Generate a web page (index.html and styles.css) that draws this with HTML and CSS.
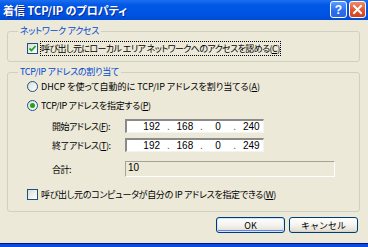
FILE: index.html
```html
<!DOCTYPE html>
<html>
    <head>
        <title>着信 TCP/IP のプロパティ</title>
        <meta charset="utf-8">
        <link rel="stylesheet" href="styles.css">
    </head>
    <body>
      <div class="window">
            <div class="titlebar">
                  <span class="title">着信 TCP/IP のプロパティ</span>
                  <span class="tbtn help">?</span>
                  <span class="tbtn close">
                        <svg width="11" height="11" viewBox="0 0 11 11"><path d="M2 2 L9 9 M9 2 L2 9" stroke="#fff" stroke-width="2" stroke-linecap="square"/></svg>
                  </span>
            </div>

            <div class="content">
                  <fieldset class="group group-1">
                        <legend>ネットワーク アクセス</legend>
                        <div class="row r-lan">
                              <span class="check on">
                                    <svg width="9" height="9" viewBox="0 0 9 9"><path d="M1.5 4.5 L3.5 6.5 L7.5 2" stroke="#21a121" stroke-width="1.8" fill="none"/></svg>
                              </span>
                              <span class="focus">呼び出し元にローカル エリア ネットワークへのアクセスを認める(<u>C</u>)</span>
                        </div>
                  </fieldset>

                  <fieldset class="group group-2">
                        <legend>TCP/IP アドレスの割り当て</legend>
                        <div class="row r-dhcp">
                              <span class="radio"></span>
                              <span>DHCP を使って自動的に TCP/IP アドレスを割り当てる(<u>A</u>)</span>
                        </div>
                        <div class="row r-static">
                              <span class="radio on"></span>
                              <span>TCP/IP アドレスを指定する(<u>P</u>)</span>
                        </div>
                        <div class="row r-ip1">
                              <span class="lbl">開始アドレス(<u>F</u>):</span>
                              <span class="ip">
                                    <span class="oct">192</span><span class="dot">.</span><span class="oct">168</span><span class="dot">.</span><span class="oct">0</span><span class="dot">.</span><span class="oct">240</span>
                              </span>
                        </div>
                        <div class="row r-ip2">
                              <span class="lbl">終了アドレス(<u>T</u>):</span>
                              <span class="ip">
                                    <span class="oct">192</span><span class="dot">.</span><span class="oct">168</span><span class="dot">.</span><span class="oct">0</span><span class="dot">.</span><span class="oct">249</span>
                              </span>
                        </div>
                        <div class="row r-total">
                              <span class="lbl">合計:</span>
                              <span class="total">10</span>
                        </div>
                        <div class="row r-caller">
                              <span class="check"></span>
                              <span>呼び出し元のコンピュータが自分の IP アドレスを指定できる(<u>W</u>)</span>
                        </div>
                  </fieldset>

                  <div class="buttons">
                        <button class="btn default">OK</button>
                        <button class="btn">キャンセル</button>
                  </div>
            </div>

            <div class="frame-bottom"></div>
      </div>
    </body>
</html>
```

FILE: styles.css
```css
body{
      margin: 0;
      font-family: "Noto Sans CJK JP", sans-serif;
      font-size: 9px;
      letter-spacing: -0.3px;
      font-feature-settings: "palt";
      color: #000;
      background: #ece9d8;
}
.window{
      width: 368px;
      height: 247px;
      display: flex;
      flex-direction: column;
      overflow: hidden;
}

/* title bar */
.titlebar{
      height: 20px;
      flex: none;
      display: flex;
      align-items: center;
      gap: 2px;
      padding: 0 2px 1px 3px;
      box-sizing: border-box;
      background: linear-gradient(#1e6ef0, #0058e6 25%, #0054e3 70%, #004bd4);
}
.title{
      flex: 1;
      color: #fff;
      font-weight: bold;
      font-size: 11px;
      letter-spacing: 0;
      text-shadow: 1px 1px #0a2a9a;
}
.tbtn{
      width: 15px;
      height: 15px;
      border: 1px solid #fff;
      border-radius: 3px;
      display: flex;
      align-items: center;
      justify-content: center;
      color: #fff;
      font-family: "Liberation Sans", sans-serif;
      font-weight: bold;
      font-size: 12px;
      letter-spacing: 0;
}
.help{background: linear-gradient(#5a9bff, #2a6cf0 60%, #2d64e0);}
.close{background: linear-gradient(#f08a68, #e0502c 60%, #d0421f);}

/* body */
.content{
      flex: 1;
      display: flex;
      flex-direction: column;
      padding: 5px 8px 0 7px;
}
.group{
      margin: 0;
      border: 1px solid #d0d0bf;
      border-radius: 3px;
      display: flex;
      flex-direction: column;
      padding: 0 6px 0 19px;
}
.group legend{
      color: #0046d5;
      padding: 0 2px;
      margin-left: -9px;
      line-height: 12px;
}
.group-1{padding-top: 4px; padding-bottom: 6px;}
.group-2{margin-top: 4px; padding-top: 1px; padding-bottom: 10px;}

.row{
      display: flex;
      align-items: center;
      gap: 3px;
      height: 14px;
      white-space: nowrap;
}
.r-lan{letter-spacing: -0.6px;}
.r-dhcp{letter-spacing: 0;}
.r-static{margin-top: 5px;}
.r-ip1{margin-top: 7px;}
.r-ip2{margin-top: 5px;}
.r-total{margin-top: 9px; height: 16px; align-items: flex-start;}
.r-total .lbl{padding-top: 2px;}
.r-caller{margin-top: 10px;}

.focus{outline: 1px dotted #000; outline-offset: 0;}

.check{
      width: 9px;
      height: 9px;
      border: 1px solid #1c5180;
      background: linear-gradient(135deg, #dcdcd7, #fff);
      display: flex;
      align-items: center;
      justify-content: center;
      flex: none;
}
.radio{
      width: 9px;
      height: 9px;
      border: 1px solid #1c5180;
      border-radius: 50%;
      background: linear-gradient(135deg, #dcdcd7, #fff);
      flex: none;
      position: relative;
}
.radio.on::after{
      content: "";
      position: absolute;
      left: 2px;
      top: 2px;
      width: 5px;
      height: 5px;
      border-radius: 50%;
      background: #21a121;
}

.lbl{
      width: 73px;
      margin-left: 25px;
      flex: none;
      letter-spacing: -0.5px;
}
.ip{
      width: 139px;
      height: 14px;
      box-sizing: border-box;
      background: #fff;
      border-style: solid;
      border-width: 2px 1px 1px 2px;
      border-color: #8a8a88 #f4f3ee #f4f3ee #8a8a88;
      display: flex;
      align-items: center;
      padding-left: 13px;
      margin-left: -3px;
      font-family: "Liberation Sans", sans-serif;
      font-size: 10px;
      letter-spacing: 0;
}
.oct{width: 24px; text-align: center;}
.dot{width: 10px; text-align: center; color: #555;}
.total{
      width: 210px;
      height: 16px;
      box-sizing: border-box;
      border-style: solid;
      border-width: 1px;
      border-color: #a5a397 #fff #fff #a5a397;
      padding: 0 2px;
      margin-left: -3px;
      font-family: "Liberation Sans", sans-serif;
      font-size: 10px;
      letter-spacing: 0;
      line-height: 12px;
}

/* buttons */
.buttons{
      display: flex;
      justify-content: flex-end;
      gap: 4px;
      margin-top: 5px;
      padding-right: 2px;
}
.btn{
      width: 69px;
      height: 16px;
      padding: 0;
      border: 1px solid #003c74;
      border-radius: 3px;
      background: linear-gradient(#fff, #f4f3ee 50%, #e6e3d8 85%, #d6d0c5);
      font-family: "Noto Sans CJK JP", "Liberation Sans", sans-serif;
      font-size: 9px;
      letter-spacing: 0;
      color: #000;
}
.btn.default{box-shadow: inset 0 0 0 1px #cee7ff, inset 0 -1px 0 1px #6982ee;}

.frame-bottom{
      height: 3px;
      flex: none;
      border-top: 1px solid #00138c;
      background: #0b4be0;
}
```
